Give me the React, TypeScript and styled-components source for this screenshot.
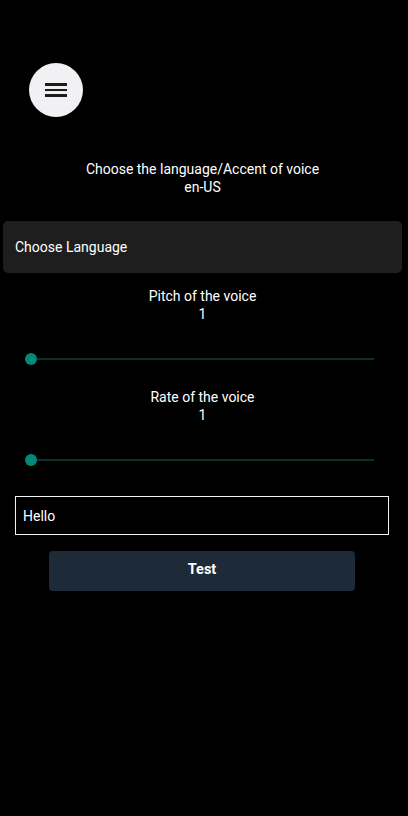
import React from "react";
import styled, { createGlobalStyle } from "styled-components";

const Global = createGlobalStyle`
  html, body { margin: 0; padding: 0; background: #000; }
  body { font-family: Roboto, "Liberation Sans", sans-serif; }
  * { box-sizing: border-box; }
`;

const Page = styled.div`
  width: 408px;
  min-height: 816px;
  background: #000;
  color: #fff;
  padding: 0 6px 0 3px;
  display: flex;
  flex-direction: column;
`;

const MenuButton = styled.button`
  margin: 63px 0 0 26px;
  width: 54px;
  height: 54px;
  border-radius: 50%;
  border: none;
  background: #f1f1f3;
  display: flex;
  flex-direction: column;
  align-items: center;
  justify-content: center;
  gap: 3px;
  padding: 0;
`;

const Bar = styled.span`
  display: block;
  width: 22px;
  height: 2.5px;
  background: #1c1c1c;
`;

const Label = styled.div<{ $top: number }>`
  margin-top: ${(p) => p.$top}px;
  text-align: center;
  font-size: 14px;
  line-height: 18px;
  color: #fff;
`;

const SelectBox = styled.div`
  margin-top: 25px;
  height: 52px;
  background: #1e1e1e;
  border-radius: 5px;
  display: flex;
  align-items: center;
  padding-left: 12px;
  font-size: 14px;
  color: #fff;
`;

const SliderWrap = styled.div`
  margin: 24px 28px 0 28px;
  height: 24px;
  position: relative;
  display: flex;
  align-items: center;
`;

const Track = styled.div`
  width: 100%;
  height: 2px;
  background: #0b2f2c;
`;

const Thumb = styled.div`
  position: absolute;
  left: -6px;
  top: 6px;
  width: 12px;
  height: 12px;
  border-radius: 50%;
  background: #00897b;
`;

const TextInput = styled.input`
  margin: 24px 13px 0 12px;
  height: 39px;
  background: #000;
  border: 1.5px solid #f2f2f2;
  color: #fff;
  font-family: Roboto, "Liberation Sans", sans-serif;
  font-size: 14px;
  padding: 0 7px;
  outline: none;
`;

const TestButton = styled.button`
  margin: 16px 47px 0 46px;
  height: 40px;
  background: #1d2b38;
  border: none;
  border-radius: 4px;
  color: #fff;
  font-family: Roboto, "Liberation Sans", sans-serif;
  font-weight: 700;
  font-size: 14.5px;
  padding: 0 0 3px 0;
`;

const Slider: React.FC = () => (
  <SliderWrap>
    <Track />
    <Thumb />
  </SliderWrap>
);

export default function App() {
  return (
    <>
      <Global />
      <Page>
        <MenuButton aria-label="menu">
          <Bar />
          <Bar />
          <Bar />
        </MenuButton>
        <Label $top={43}>
          Choose the language/Accent of voice
          <br />
          en-US
        </Label>
        <SelectBox>Choose Language</SelectBox>
        <Label $top={14}>
          Pitch of the voice
          <br />1
        </Label>
        <Slider />
        <Label $top={17}>
          Rate of the voice
          <br />1
        </Label>
        <Slider />
        <TextInput defaultValue="Hello" />
        <TestButton>Test</TestButton>
      </Page>
    </>
  );
}
